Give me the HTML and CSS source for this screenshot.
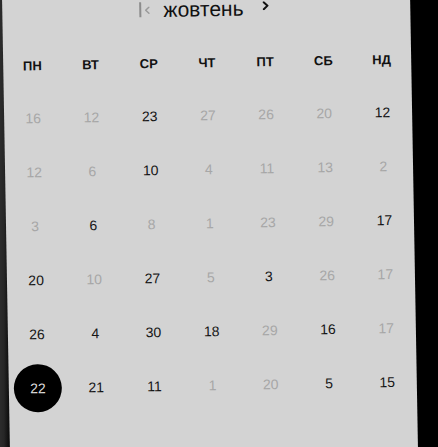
FILE: index.html
```html
<!DOCTYPE html>
<html lang="uk">
<head>
<meta charset="utf-8">
<title>Календар</title>
<link rel="stylesheet" href="styles.css">
</head>
<body>
<div class="panel">
  <div class="nav">
    <span class="nav-bar"></span>
    <svg class="chev chev-prev" width="6" height="8" viewBox="0 0 6 8"><path d="M4.6 1 L1.4 4 L4.6 7"/></svg>
    <span class="month">жовтень</span>
    <svg class="chev chev-next" width="7" height="9" viewBox="0 0 7 9"><path d="M1.5 1 L5.3 4.5 L1.5 8"/></svg>
  </div>
  <div class="weekdays">
    <span>ПН</span><span>ВТ</span><span>СР</span><span>ЧТ</span><span>ПТ</span><span>СБ</span><span>НД</span>
  </div>
  <div class="days">
    <span class="day muted">16</span><span class="day muted">12</span><span class="day">23</span><span class="day muted">27</span><span class="day muted">26</span><span class="day muted">20</span><span class="day">12</span>
    <span class="day muted">12</span><span class="day muted">6</span><span class="day">10</span><span class="day muted">4</span><span class="day muted">11</span><span class="day muted">13</span><span class="day muted">2</span>
    <span class="day muted">3</span><span class="day">6</span><span class="day muted">8</span><span class="day muted">1</span><span class="day muted">23</span><span class="day muted">29</span><span class="day">17</span>
    <span class="day">20</span><span class="day muted">10</span><span class="day">27</span><span class="day muted">5</span><span class="day">3</span><span class="day muted">26</span><span class="day muted">17</span>
    <span class="day">26</span><span class="day">4</span><span class="day">30</span><span class="day">18</span><span class="day muted">29</span><span class="day">16</span><span class="day muted">17</span>
    <span class="day selected"><span class="dot">22</span></span><span class="day">21</span><span class="day">11</span><span class="day muted">1</span><span class="day muted">20</span><span class="day">5</span><span class="day">15</span>
  </div>
</div>
</body>
</html>
```
FILE: styles.css
```css
html, body {
  margin: 0;
  height: 100%;
  overflow: hidden;
}
body {
  background: linear-gradient(to right, #2c2c2c 0, #262626 4px, #0d0d0d 9px, #000 14px);
  font-family: "Liberation Sans", Arial, sans-serif;
}
.panel {
  box-sizing: border-box;
  width: 407.5px;
  height: 462px;
  margin: -10px 0 0 5.5px;
  padding-top: 10px;
  background: #d3d3d3;
  transform: rotate(-1deg);
  transform-origin: 213.5px 233px;
}
.nav {
  display: flex;
  align-items: center;
  height: 18px;
  padding-left: 137.2px;
}
.nav-bar {
  width: 1.5px;
  height: 15px;
  background: #8c8c8c;
  margin-top: -1px;
}
.chev {
  fill: none;
  stroke-linecap: round;
  stroke-linejoin: round;
}
.chev-prev {
  stroke: #9a9a9a;
  stroke-width: 1.5;
  margin-left: 3.5px;
}
.month {
  margin-left: 13px;
  font-size: 21px;
  line-height: 18px;
  color: #111;
}
.chev-next {
  stroke: #111;
  stroke-width: 2;
  margin-left: 19px;
  align-self: flex-start;
  margin-top: 1.5px;
}
.weekdays {
  display: grid;
  grid-template-columns: repeat(7, 1fr);
  margin-top: 34.8px;
  height: 20px;
  line-height: 20px;
  font-size: 13px;
  font-weight: bold;
  text-align: center;
  color: #111;
}
.days {
  display: grid;
  grid-template-columns: repeat(7, 1fr);
  grid-auto-rows: 54px;
  margin-top: 15px;
}
.day {
  display: flex;
  align-items: center;
  justify-content: center;
  font-size: 14px;
  color: #161616;
}
.day.muted {
  color: #a7a7a7;
}
.dot {
  display: flex;
  align-items: center;
  justify-content: center;
  width: 48px;
  height: 48px;
  border-radius: 50%;
  background: #000;
  color: #dcdcdc;
}
```
